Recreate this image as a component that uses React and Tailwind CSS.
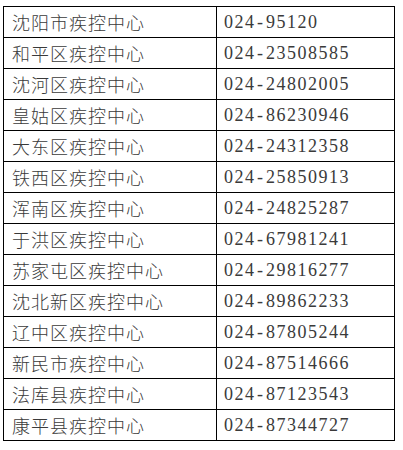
const rows = [
  ["沈阳市疾控中心", "024", "95120"],
  ["和平区疾控中心", "024", "23508585"],
  ["沈河区疾控中心", "024", "24802005"],
  ["皇姑区疾控中心", "024", "86230946"],
  ["大东区疾控中心", "024", "24312358"],
  ["铁西区疾控中心", "024", "25850913"],
  ["浑南区疾控中心", "024", "24825287"],
  ["于洪区疾控中心", "024", "67981241"],
  ["苏家屯区疾控中心", "024", "29816277"],
  ["沈北新区疾控中心", "024", "89862233"],
  ["辽中区疾控中心", "024", "87805244"],
  ["新民市疾控中心", "024", "87514666"],
  ["法库县疾控中心", "024", "87123543"],
  ["康平县疾控中心", "024", "87344727"],
];

export default function App() {
  return (
    <div className="w-[403px] h-[450px] bg-white pt-[6px] pl-[3px]">
      <div className="grid grid-cols-[213px_178px] w-[392px] border-t border-l border-black">
        {rows.map(([name, a, b], i) => (
          <div key={i} className="contents">
            <div className="h-[31px] border-r border-b border-black flex items-center pl-2 text-[18px] leading-none tracking-[1px] text-[#3a3a3a] font-['Noto_Sans_CJK_SC',sans-serif] font-light">
              {name}
            </div>
            <div className="h-[31px] border-r border-b border-black flex items-center pl-[7px] text-[18px] leading-none tracking-[1.5px] text-[#3a3a3a] font-['Liberation_Serif',serif]">
              {a}
              <span className="mx-[1.5px]">-</span>
              {b}
            </div>
          </div>
        ))}
      </div>
    </div>
  );
}
